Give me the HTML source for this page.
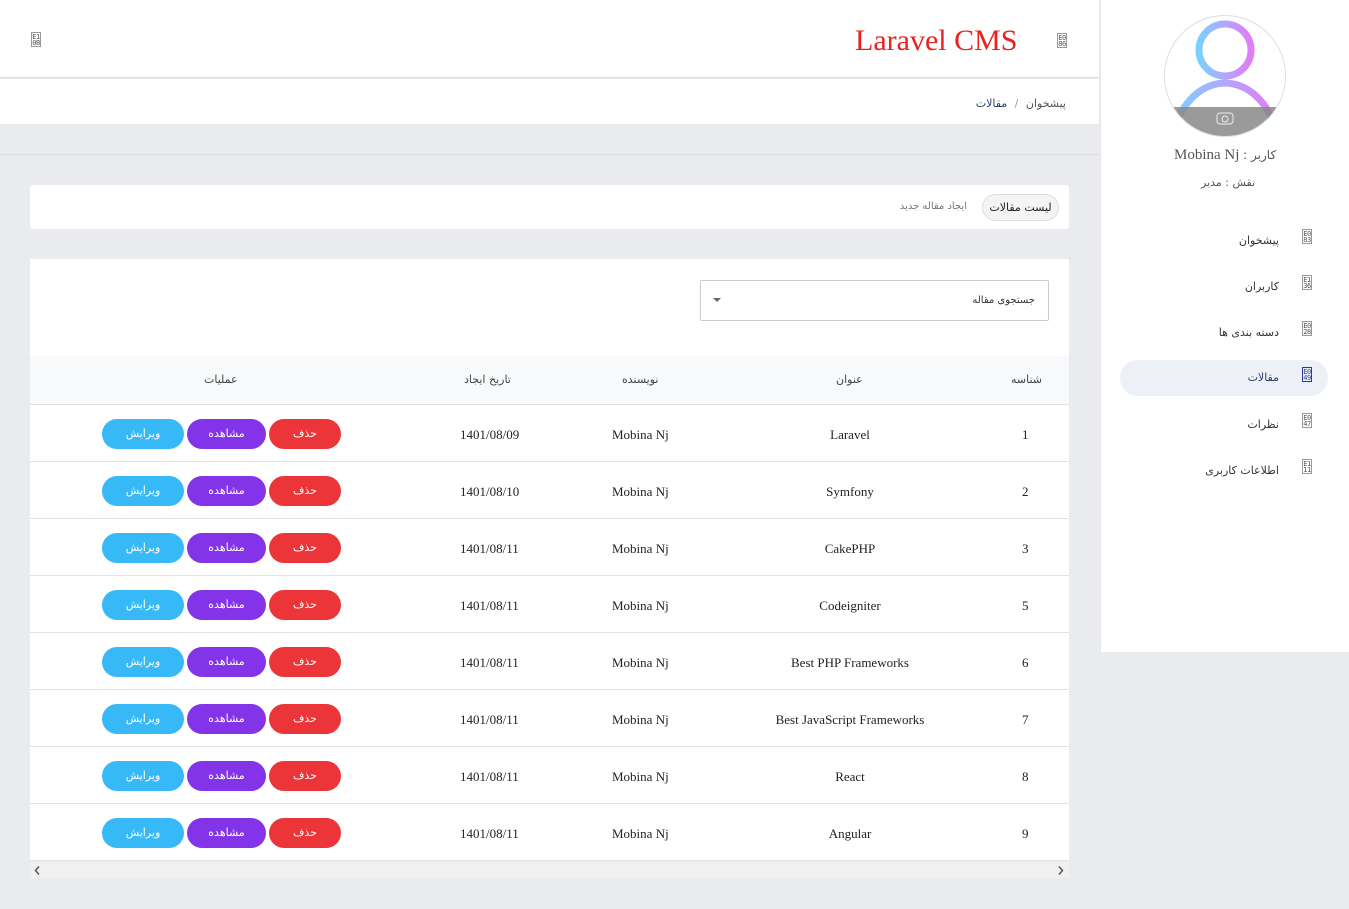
<!DOCTYPE html>
<html><head><meta charset="utf-8"><style>
*{margin:0;padding:0;box-sizing:border-box}
body{width:1349px;height:909px;background:#e9ebef;font-family:"Liberation Serif","Noto Sans CJK SC",serif;color:#333;position:relative;overflow:hidden;font-size:13px}
.abs{position:absolute}
.ic{position:absolute;width:10px;height:15px;border:1px solid #999;font:7px/6px "DejaVu Sans Mono",monospace;color:#555;text-align:center;padding-top:1px;letter-spacing:-0.5px}
.fa{font-family:"DejaVu Sans","Noto Sans CJK SC",sans-serif}
.row{position:absolute;left:30px;width:1039px;height:57px;border-bottom:1px solid #e3e3e3;background:#fff}
.row div{position:absolute;top:22px;font-size:13px;color:#222}
.btn{position:absolute;top:14px;height:30px;border-radius:15px;color:#fff;font:11px/30px "DejaVu Sans",sans-serif;text-align:center}
.nav{position:absolute;right:70px;font:11px "DejaVu Sans",sans-serif;color:#333}
</style></head><body>
<div class="abs" style="left:0;top:0;width:1099px;height:78px;background:#fff;border-bottom:1px solid #ddd"></div>
<div class="ic" style="left:31px;top:32px">E1<br>0B</div>
<div class="abs" style="left:855px;top:24px;font-size:30px;color:#e9221e">Laravel CMS</div>
<div class="ic" style="left:1057px;top:33px">E0<br>86</div>
<div class="abs" style="left:0;top:79px;width:1099px;height:45px;background:#fff"></div>
<div class="abs fa" style="right:283px;top:97px;font-size:11px;color:#555">پیشخوان <span style="color:#999;margin:0 4px">/</span> <span style="color:#2a3f6b">مقالات</span></div>
<div class="abs" style="left:0;top:154px;width:1099px;height:1px;background:#dcdde0"></div>
<div class="abs" style="left:30px;top:185px;width:1039px;height:44px;background:#fff;border-radius:3px"></div>
<div class="abs fa" style="left:982px;top:194px;width:77px;height:27px;border:1px solid #ddd;border-radius:14px;background:#f3f4f6;font-size:11px;line-height:25px;text-align:center;color:#222">لیست مقالات</div>
<div class="abs fa" style="right:382px;top:201px;font-size:10px;color:#777">ایجاد مقاله جدید</div>
<div class="abs" style="left:30px;top:259px;width:1039px;height:97px;background:#fff"></div>
<div class="abs" style="left:700px;top:280px;width:349px;height:41px;border:1px solid #ccc;border-radius:2px;background:#fff"></div>
<div class="abs fa" style="right:314px;top:295px;font-size:10px;color:#333">جستجوی مقاله</div>
<div class="abs" style="left:713px;top:298px;width:0;height:0;border-left:4px solid transparent;border-right:4px solid transparent;border-top:4px solid #666"></div>
<div class="abs" style="left:30px;top:356px;width:1039px;height:49px;background:#f8f9fa;border-bottom:1px solid #e0e0e0"></div>
<div class="abs fa" style="right:307px;top:373px;font-size:11px;color:#444">شناسه</div>
<div class="abs fa" style="left:836px;top:373px;font-size:11px;color:#444">عنوان</div>
<div class="abs fa" style="left:622px;top:373px;font-size:11px;color:#444">نویسنده</div>
<div class="abs fa" style="left:464px;top:373px;font-size:11px;color:#444">تاریخ ایجاد</div>
<div class="abs fa" style="left:204px;top:373px;font-size:11px;color:#444">عملیات</div>

<div class="row" style="top:405px"><div style="left:992px">1</div><div style="left:0;width:1640px;text-align:center">Laravel</div><div style="left:582px">Mobina Nj</div><div style="left:430px">1401/08/09</div><span class="btn" style="left:239px;width:72px;background:#ec3538">حذف</span><span class="btn" style="left:157px;width:79px;background:#8434e8">مشاهده</span><span class="btn" style="left:72px;width:82px;background:#37b9f7">ویرایش</span></div>
<div class="row" style="top:462px"><div style="left:992px">2</div><div style="left:0;width:1640px;text-align:center">Symfony</div><div style="left:582px">Mobina Nj</div><div style="left:430px">1401/08/10</div><span class="btn" style="left:239px;width:72px;background:#ec3538">حذف</span><span class="btn" style="left:157px;width:79px;background:#8434e8">مشاهده</span><span class="btn" style="left:72px;width:82px;background:#37b9f7">ویرایش</span></div>
<div class="row" style="top:519px"><div style="left:992px">3</div><div style="left:0;width:1640px;text-align:center">CakePHP</div><div style="left:582px">Mobina Nj</div><div style="left:430px">1401/08/11</div><span class="btn" style="left:239px;width:72px;background:#ec3538">حذف</span><span class="btn" style="left:157px;width:79px;background:#8434e8">مشاهده</span><span class="btn" style="left:72px;width:82px;background:#37b9f7">ویرایش</span></div>
<div class="row" style="top:576px"><div style="left:992px">5</div><div style="left:0;width:1640px;text-align:center">Codeigniter</div><div style="left:582px">Mobina Nj</div><div style="left:430px">1401/08/11</div><span class="btn" style="left:239px;width:72px;background:#ec3538">حذف</span><span class="btn" style="left:157px;width:79px;background:#8434e8">مشاهده</span><span class="btn" style="left:72px;width:82px;background:#37b9f7">ویرایش</span></div>
<div class="row" style="top:633px"><div style="left:992px">6</div><div style="left:0;width:1640px;text-align:center">Best PHP Frameworks</div><div style="left:582px">Mobina Nj</div><div style="left:430px">1401/08/11</div><span class="btn" style="left:239px;width:72px;background:#ec3538">حذف</span><span class="btn" style="left:157px;width:79px;background:#8434e8">مشاهده</span><span class="btn" style="left:72px;width:82px;background:#37b9f7">ویرایش</span></div>
<div class="row" style="top:690px"><div style="left:992px">7</div><div style="left:0;width:1640px;text-align:center">Best JavaScript Frameworks</div><div style="left:582px">Mobina Nj</div><div style="left:430px">1401/08/11</div><span class="btn" style="left:239px;width:72px;background:#ec3538">حذف</span><span class="btn" style="left:157px;width:79px;background:#8434e8">مشاهده</span><span class="btn" style="left:72px;width:82px;background:#37b9f7">ویرایش</span></div>
<div class="row" style="top:747px"><div style="left:992px">8</div><div style="left:0;width:1640px;text-align:center">React</div><div style="left:582px">Mobina Nj</div><div style="left:430px">1401/08/11</div><span class="btn" style="left:239px;width:72px;background:#ec3538">حذف</span><span class="btn" style="left:157px;width:79px;background:#8434e8">مشاهده</span><span class="btn" style="left:72px;width:82px;background:#37b9f7">ویرایش</span></div>
<div class="row" style="top:804px"><div style="left:992px">9</div><div style="left:0;width:1640px;text-align:center">Angular</div><div style="left:582px">Mobina Nj</div><div style="left:430px">1401/08/11</div><span class="btn" style="left:239px;width:72px;background:#ec3538">حذف</span><span class="btn" style="left:157px;width:79px;background:#8434e8">مشاهده</span><span class="btn" style="left:72px;width:82px;background:#37b9f7">ویرایش</span></div>
<div class="abs" style="left:30px;top:862px;width:1039px;height:16px;background:#f0f0f0"></div>
<svg class="abs" style="left:34px;top:866px" width="6" height="9"><path d="M5 0.5 L1.5 4.5 L5 8.5" fill="none" stroke="#555" stroke-width="1.5"/></svg>
<svg class="abs" style="left:1058px;top:866px" width="6" height="9"><path d="M1 0.5 L4.5 4.5 L1 8.5" fill="none" stroke="#555" stroke-width="1.5"/></svg>

<div class="abs" style="left:1100px;top:0;width:249px;height:652px;background:#fff;border-left:1px solid #e5e5e5"></div>
<svg class="abs" style="left:1163px;top:14px" width="124" height="124" viewBox="0 0 124 124">
<defs><linearGradient id="g" x1="0" x2="1"><stop offset="0" stop-color="#7cd0ff"/><stop offset="0.5" stop-color="#b3a6ff"/><stop offset="1" stop-color="#e07cf5"/></linearGradient>
<clipPath id="c"><circle cx="62" cy="62" r="60"/></clipPath></defs>
<circle cx="62" cy="62" r="60.5" fill="#fff" stroke="#ddd"/>
<g clip-path="url(#c)">
<circle cx="62" cy="36" r="26" fill="none" stroke="url(#g)" stroke-width="7"/>
<path d="M12 110 Q30 70 62 69 Q94 70 112 110" fill="none" stroke="url(#g)" stroke-width="7"/>
<rect x="0" y="93" width="124" height="40" fill="#888" opacity="0.85"/>
<rect x="54" y="99" width="16" height="11" rx="3" fill="none" stroke="#eee" stroke-width="1"/>
<circle cx="62" cy="105" r="3" fill="none" stroke="#eee"/>
</g></svg>
<div class="abs" style="left:1174px;top:147px;font-size:15px;color:#555"><span>Mobina Nj</span> <span class="fa" style="font-size:12px">: کاربر</span></div>
<div class="abs fa" style="left:1201px;top:176px;font-size:11px;color:#555">نقش : مدیر</div>
<div class="abs" style="left:1120px;top:360px;width:208px;height:36px;border-radius:18px;background:#eef0f8"></div>
<div class="nav" style="top:234px">پیشخوان</div><div class="ic" style="left:1302px;top:229px">E0<br>83</div>
<div class="nav" style="top:280px">کاربران</div><div class="ic" style="left:1302px;top:275px">E1<br>36</div>
<div class="nav" style="top:326px">دسته بندی ها</div><div class="ic" style="left:1302px;top:321px">E0<br>28</div>
<div class="nav" style="top:371px;color:#2a3f6b">مقالات</div><div class="ic" style="left:1302px;top:367px;border-color:#2a3f9b;color:#2a3f9b">E0<br>49</div>
<div class="nav" style="top:418px">نظرات</div><div class="ic" style="left:1302px;top:413px">E0<br>47</div>
<div class="nav" style="top:464px">اطلاعات کاربری</div><div class="ic" style="left:1302px;top:459px">E1<br>11</div>
</body></html>
